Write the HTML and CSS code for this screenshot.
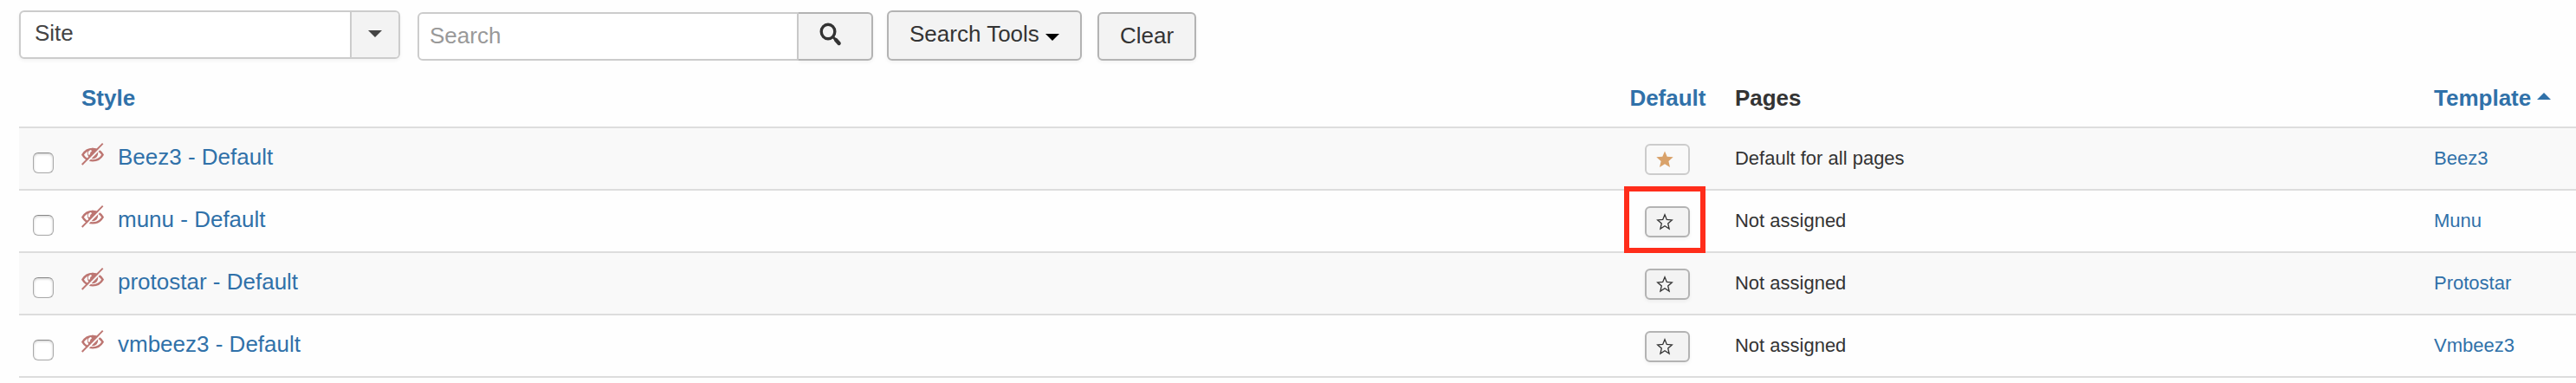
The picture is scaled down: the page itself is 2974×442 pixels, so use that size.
FILE: index.html
```html
<!DOCTYPE html>
<html lang="en">
<head>
<meta charset="utf-8">
<title>Template styles</title>
<link rel="stylesheet" href="styles.css">
</head>
<body>
<svg class="sprite" aria-hidden="true">
  <mask id="slash-gap" maskUnits="userSpaceOnUse" x="0" y="0" width="26" height="26">
    <path fill="#fff" d="M0 0h26v26H0z"/>
    <path stroke="#000" stroke-width="2.200" d="M26.500 1.500L3 25.200"/>
    <path fill="none" stroke="#000" stroke-width="2.400" stroke-linecap="round" d="M10.600 9.200c-1.400.700-1.900 1.900-1.700 3.300"/>
  </mask>
  <symbol id="eye-off" viewBox="0 0 26 26">
    <g mask="url(#slash-gap)">
      <path fill="none" stroke="currentColor" stroke-width="2.400" d="M1.400 13.700C4 9.200 8.200 7 13 7s9 2.200 11.600 6.700C22 18.200 17.800 20.400 13 20.400S4 18.200 1.400 13.700z"/>
      <circle cx="13" cy="12" r="6.200" fill="currentColor"/>
    </g>
    <path stroke="currentColor" stroke-width="1.900" d="M24.700.700L.700 25"/>
  </symbol>
  <symbol id="star-filled" viewBox="0 0 20 20">
    <path fill="currentColor" d="M10 .500l2.700 6.300 7 .500-5.300 4.600 1.600 7-6-3.600-6 3.600 1.600-7L.300 7.300l7-.500z"/>
  </symbol>
  <symbol id="star-empty" viewBox="0 0 20 20">
    <path fill="none" stroke="currentColor" stroke-width="1.300" d="M10 1.800l2.300 5.600 6 .500-4.600 4 1.400 6.100-5.100-3.200L4.900 18l1.400-6.100-4.600-4 6-.500z"/>
  </symbol>
</svg>

<form class="toolbar">
  <div class="client">
    <select class="client-select" aria-label="Client"><option>Site</option><option>Administrator</option></select>
    <span class="client-arrow"><svg class="caret" viewBox="0 0 16 8"><path d="M0 0h16L8 8z"/></svg></span>
  </div>
  <div class="search">
    <input class="search-input" type="text" placeholder="Search" aria-label="Search">
    <button class="btn search-btn" type="button" aria-label="Submit search">
      <svg class="search-icon" viewBox="0 0 26 28"><g fill="none" stroke="currentColor"><ellipse cx="10" cy="10.500" rx="7.800" ry="8.200" stroke-width="3.400"/><path stroke-width="3" d="M15 16l3 3"/><path stroke-width="4.400" stroke-linecap="round" d="M19 20l3.600 4"/></g></svg>
    </button>
  </div>
  <button class="btn tools-btn" type="button">Search Tools <svg class="caret" viewBox="0 0 16 8"><path d="M0 0h16L8 8z"/></svg></button>
  <button class="btn clear-btn" type="button">Clear</button>
</form>

<table class="styles">
  <colgroup><col class="col-check"><col><col class="col-default"><col class="col-pages"><col class="col-template"></colgroup>
  <thead>
    <tr>
      <td></td>
      <th><a href="#">Style</a></th>
      <th class="center"><a href="#">Default</a></th>
      <th>Pages</th>
      <th><a href="#">Template <svg class="caret sort" viewBox="0 0 16 8"><path d="M0 8h16L8 0z"/></svg></a></th>
    </tr>
  </thead>
  <tbody>
    <tr>
      <td><input class="check" type="checkbox" aria-label="Select Beez3 - Default"></td>
      <td><div class="name"><svg class="eye"><use href="#eye-off"/></svg><a href="#">Beez3 - Default</a></div></td>
      <td class="center"><button class="btn star-btn active" type="button" aria-label="Default style" disabled><svg class="star"><use href="#star-filled"/></svg></button></td>
      <td class="small">Default for all pages</td>
      <td class="small"><a href="#">Beez3</a></td>
    </tr>
    <tr>
      <td><input class="check" type="checkbox" aria-label="Select munu - Default"></td>
      <td><div class="name"><svg class="eye"><use href="#eye-off"/></svg><a href="#">munu - Default</a></div></td>
      <td class="center"><button class="btn star-btn marked" type="button" aria-label="Set munu as default"><svg class="star"><use href="#star-empty"/></svg></button></td>
      <td class="small">Not assigned</td>
      <td class="small"><a href="#">Munu</a></td>
    </tr>
    <tr>
      <td><input class="check" type="checkbox" aria-label="Select protostar - Default"></td>
      <td><div class="name"><svg class="eye"><use href="#eye-off"/></svg><a href="#">protostar - Default</a></div></td>
      <td class="center"><button class="btn star-btn" type="button" aria-label="Set protostar as default"><svg class="star"><use href="#star-empty"/></svg></button></td>
      <td class="small">Not assigned</td>
      <td class="small"><a href="#">Protostar</a></td>
    </tr>
    <tr>
      <td><input class="check" type="checkbox" aria-label="Select vmbeez3 - Default"></td>
      <td><div class="name"><svg class="eye"><use href="#eye-off"/></svg><a href="#">vmbeez3 - Default</a></div></td>
      <td class="center"><button class="btn star-btn" type="button" aria-label="Set vmbeez3 as default"><svg class="star"><use href="#star-empty"/></svg></button></td>
      <td class="small">Not assigned</td>
      <td class="small"><a href="#">Vmbeez3</a></td>
    </tr>
  </tbody>
</table>
</body>
</html>
```

FILE: styles.css
```css
* { box-sizing: border-box; }

body {
  margin: 0;
  padding: 12px 0 0 22px;
  background: #fefefe;
  color: #333;
  font: 26px/36px "Liberation Sans", Arial, sans-serif;
}

a { color: #3071a9; text-decoration: none; }

.sprite { display: block; width: 0; height: 0; }

input, select, button { font: inherit; color: inherit; margin: 0; }

.toolbar {
  display: flex;
  align-items: flex-end;
  height: 58px;
  margin-bottom: 8px;
}

.btn {
  border: 2px solid #b3b3b3;
  border-radius: 6px;
  background: #f3f3f3;
  box-shadow: 0 2px 4px rgba(0, 0, 0, 0.05);
  white-space: nowrap;
}

.caret { width: 16px; height: 8px; fill: currentColor; }

.client {
  display: grid;
  grid-template-columns: 1fr 58px;
  align-self: flex-start;
  width: 440px;
  height: 56px;
  margin-right: 20px;
}

.client-select {
  grid-area: 1 / 1 / 2 / 3;
  appearance: none;
  padding: 0 16px 4px;
  border: 2px solid #ccc;
  border-radius: 6px;
  background: #fff;
  color: #444;
  box-shadow: 0 2px 4px rgba(0, 0, 0, 0.05);
}

.client-arrow {
  grid-area: 1 / 2;
  display: flex;
  align-items: center;
  justify-content: center;
  margin: 2px 2px 2px 0;
  padding-bottom: 2px;
  border-left: 2px solid #ccc;
  border-radius: 0 4px 4px 0;
  background: #f3f3f3;
  color: #444;
  pointer-events: none;
}

.search { display: flex; height: 56px; margin-right: 16px; }

.search-input {
  width: 440px;
  padding: 0 12px 2px;
  border: 2px solid #ccc;
  border-radius: 6px 0 0 6px;
  background: #fff;
}

.search-input::placeholder { color: #999; opacity: 1; }

.search-btn {
  width: 86px;
  padding: 0 10px 4px 0;
  border-left: 0;
  border-radius: 0 6px 6px 0;
}

.search-icon { display: block; width: 26px; height: 28px; margin: 0 auto; }

.tools-btn { height: 58px; padding: 0 24px 4px; margin-right: 18px; color: #333; }
.tools-btn .caret { margin-bottom: 1px; fill: #000; }

.clear-btn { height: 56px; padding: 0 24px 2px; }

.styles {
  width: 100%;
  table-layout: fixed;
  border-collapse: separate;
  border-spacing: 0;
  border-bottom: 2px solid #ddd;
}

.col-check { width: 56px; }
.col-default { width: 123px; }
.col-pages { width: 27.34%; }
.col-template { width: 180px; }

.styles th, .styles td { padding: 16px; text-align: left; vertical-align: top; }
.styles .center { padding-right: 0; padding-left: 0; text-align: center; }
.styles th { padding: 17px 16px 15px; white-space: nowrap; }

.styles tbody td { height: 72px; padding-bottom: 14px; border-top: 2px solid #ddd; }
.styles tbody tr:nth-child(odd) { background: #f9f9f9; }
.styles .small { padding-top: 17px; padding-bottom: 13px; font-size: 22px; }

.sort { margin: 0 -6px 7px 0; }

.check {
  appearance: none;
  display: block;
  width: 24px;
  height: 24px;
  margin-top: 12px;
  border: 1px solid #aaa;
  border-top-color: #888;
  border-radius: 6px;
  background: #fff;
  box-shadow: inset 0 1px 3px rgba(0, 0, 0, 0.2);
}

.name { display: flex; gap: 16px; line-height: 34px; }

.eye { width: 26px; height: 26px; margin-top: 1px; color: #bd7672; }

.star-btn {
  display: inline-flex;
  justify-content: center;
  align-items: center;
  position: relative;
  width: 52px;
  height: 36px;
  margin-top: 2px;
  padding: 0 6px 0 0;
  vertical-align: top;
}

.star { width: 20px; height: 20px; }

.star-btn.active {
  border-color: #ccc;
  background: #f9f9f9;
  color: #d9a26a;
  box-shadow: none;
}

.star-btn.marked::after {
  content: "";
  position: absolute;
  inset: -25px -20px -20px -26px;
  border: 6px solid #ff2d1b;
}
```
